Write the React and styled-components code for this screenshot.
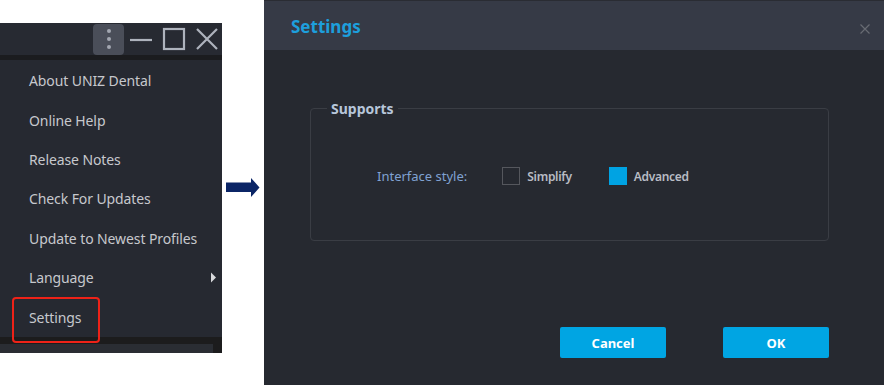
import React from "react";
import styled, { createGlobalStyle } from "styled-components";

const Global = createGlobalStyle`
  html, body { margin: 0; padding: 0; background: #ffffff; }
  body { width: 884px; height: 385px; overflow: hidden; font-family: "Noto Sans", "Open Sans", sans-serif; }
`;

const Page = styled.div`
  display: flex;
  width: 884px;
  height: 385px;
  background: #ffffff;
`;

const LeftPanel = styled.div`
  position: relative;
  width: 222px;
  margin-top: 23px;
  height: 330px;
  display: flex;
  flex-direction: column;
  background: #262931;
`;

const TitleBar = styled.div`
  height: 32px;
  display: flex;
  align-items: center;
  justify-content: flex-end;
  padding-right: 3px;
  background: #272a32;
  border-bottom: 5px solid #1b1c1f;
`;

const KebabBtn = styled.div`
  width: 31px;
  height: 31px;
  border-radius: 4px;
  background: #4a4e59;
  display: flex;
  flex-direction: column;
  align-items: center;
  justify-content: center;
  gap: 4px;
  margin-right: 5px;
  span {
    width: 4px;
    height: 4px;
    border-radius: 50%;
    background: #a3a7b1;
  }
`;

const WinIcon = styled.svg`
  width: 24px;
  height: 24px;
  margin-left: ${(p) => p.$gap || 0}px;
  flex: none;
`;

const Menu = styled.div`
  padding-top: 1px;
  display: flex;
  flex-direction: column;
`;

const MenuItem = styled.div`
  position: relative;
  height: 39.4px;
  display: flex;
  align-items: center;
  padding-left: 29px;
  font-size: 14px;
  color: #c6c8cd;
  letter-spacing: -0.1px;
`;

const SubArrow = styled.span`
  position: absolute;
  right: 6px;
  top: 50%;
  transform: translateY(-55%);
  width: 0;
  height: 0;
  border-top: 5px solid transparent;
  border-bottom: 5px solid transparent;
  border-left: 5px solid #d8d9dc;
`;

const Highlight = styled.div`
  position: absolute;
  left: 12px;
  top: 274px;
  width: 84px;
  height: 42px;
  border: 2px solid #ee2218;
  border-radius: 4px;
`;

const BottomDark = styled.div`
  height: 7px;
  background: #1c1c1d;
`;

const BottomRow = styled.div`
  height: 9px;
  display: flex;
  background: #1c1c1d;
`;

const BottomFill = styled.div`
  width: 213px;
  background: #2a2d33;
`;

const ArrowCol = styled.div`
  width: 42px;
  padding-top: 178px;
  padding-left: 4px;
  box-sizing: border-box;
`;

const Dialog = styled.div`
  flex: 1;
  height: 385px;
  display: flex;
  flex-direction: column;
  background: #262930;
`;

const Header = styled.div`
  height: 49px;
  border-top: 1px solid #2a2c33;
  background: #363a46;
  display: flex;
  align-items: center;
  justify-content: space-between;
  padding: 0 14px 0 27px;
`;

const Title = styled.div`
  color: #1d9fdd;
  font-weight: 700;
  font-size: 17px;
  padding-top: 2px;
`;

const CloseX = styled.svg`
  width: 10px;
  height: 10px;
  margin-top: 6px;
`;

const Body = styled.div`
  flex: 1;
  padding: 49px 55px 0 46px;
  display: flex;
  flex-direction: column;
`;

const Group = styled.fieldset`
  margin: 0;
  height: 142px;
  box-sizing: border-box;
  border: 1px solid #3a3d44;
  border-radius: 4px;
  padding: 0;
  display: flex;
  align-items: flex-start;
`;

const Legend = styled.legend`
  margin-left: 16px;
  padding: 0 4px;
  font-size: 14px;
  font-weight: 700;
  color: #b7c6da;
`;

const OptionRow = styled.div`
  display: flex;
  align-items: center;
  margin-top: 49px;
  margin-left: 66px;
`;

const Label = styled.span`
  color: #80a2d2;
  font-size: 13px;
  margin-right: 35px;
`;

const Check = styled.span`
  width: 18px;
  height: 18px;
  box-sizing: border-box;
  border: 1px solid ${(p) => (p.$on ? "#00a3e3" : "#55575d")};
  background: ${(p) => (p.$on ? "#00a3e3" : "transparent")};
  margin-right: 7px;
`;

const CheckText = styled.span`
  color: #b8bcc4;
  font-size: 12px;
  font-weight: 600;
  letter-spacing: -0.3px;
  margin-right: ${(p) => p.$mr || 0}px;
`;

const Footer = styled.div`
  margin-top: 86px;
  display: flex;
  justify-content: flex-end;
  gap: 57px;
`;

const Button = styled.div`
  width: 106px;
  height: 31px;
  border-radius: 2px;
  background: #00a5e3;
  color: #ffffff;
  font-size: 13px;
  font-weight: 700;
  display: flex;
  align-items: center;
  justify-content: center;
`;

const items = [
  "About UNIZ Dental",
  "Online Help",
  "Release Notes",
  "Check For Updates",
  "Update to Newest Profiles",
  "Language",
  "Settings",
];

export default function App() {
  return (
    <Page>
      <Global />
      <LeftPanel>
        <TitleBar>
          <KebabBtn>
            <span />
            <span />
            <span />
          </KebabBtn>
          <WinIcon viewBox="0 0 24 24">
            <line x1="1" y1="13" x2="23" y2="13" stroke="#aeb3bd" strokeWidth="2.2" />
          </WinIcon>
          <WinIcon viewBox="0 0 24 24" $gap={9}>
            <rect x="2" y="2" width="20" height="20" fill="none" stroke="#aeb3bd" strokeWidth="2.2" />
          </WinIcon>
          <WinIcon viewBox="0 0 24 24" $gap={9}>
            <path d="M2 2 L22 22 M22 2 L2 22" stroke="#aeb3bd" strokeWidth="2.2" />
          </WinIcon>
        </TitleBar>
        <Menu>
          {items.map((t) => (
            <MenuItem key={t}>
              {t}
              {t === "Language" && <SubArrow />}
            </MenuItem>
          ))}
        </Menu>
        <BottomDark />
        <BottomRow>
          <BottomFill />
        </BottomRow>
        <Highlight />
      </LeftPanel>
      <ArrowCol>
        <svg width="34" height="19" viewBox="0 0 34 19">
          <path d="M0 4.5 H25 V0 L33.5 9.5 L25 19 V14 H0 Z" fill="#0b2566" />
        </svg>
      </ArrowCol>
      <Dialog>
        <Header>
          <Title>Settings</Title>
          <CloseX viewBox="0 0 10 10">
            <path d="M0.5 0.5 L9.5 9.5 M9.5 0.5 L0.5 9.5" stroke="#686b73" strokeWidth="1.2" />
          </CloseX>
        </Header>
        <Body>
          <Group>
            <Legend>Supports</Legend>
            <OptionRow>
              <Label>Interface style:</Label>
              <Check />
              <CheckText $mr={37}>Simplify</CheckText>
              <Check $on />
              <CheckText>Advanced</CheckText>
            </OptionRow>
          </Group>
          <Footer>
            <Button>Cancel</Button>
            <Button>OK</Button>
          </Footer>
        </Body>
      </Dialog>
    </Page>
  );
}
